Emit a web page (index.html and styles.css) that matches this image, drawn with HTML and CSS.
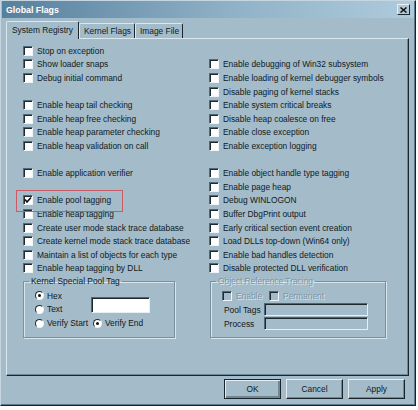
FILE: index.html
```html
<!DOCTYPE html>
<html lang="en">
<head>
  <meta charset="UTF-8" />
  <title>Global Flags</title>
  <link rel="stylesheet" href="styles.css">
</head>
<body>

  <div class="window">
    <!-- title bar -->
    <div class="titlebar">
      <span class="title">Global Flags</span>
      <span class="close">
        <svg width="7" height="6" viewBox="0 0 7 6"><path d="M0.5 0.5 L6.5 5.5 M6.5 0.5 L0.5 5.5" stroke="#111" stroke-width="1.5"/></svg>
      </span>
    </div>

    <!-- tabs -->
    <div class="tabs">
      <div class="tab active">System Registry</div>
      <div class="tab">Kernel Flags</div>
      <div class="tab">Image File</div>
    </div>

    <div class="panel">
      <!-- flags, filled column by column -->
      <div class="flags">
        <label class="flag"><span class="box"></span>Stop on exception</label>
        <label class="flag"><span class="box"></span>Show loader snaps</label>
        <label class="flag"><span class="box"></span>Debug initial command</label>
        <div></div>
        <label class="flag"><span class="box"></span>Enable heap tail checking</label>
        <label class="flag"><span class="box"></span>Enable heap free checking</label>
        <label class="flag"><span class="box"></span>Enable heap parameter checking</label>
        <label class="flag"><span class="box"></span>Enable heap validation on call</label>
        <div></div>
        <label class="flag"><span class="box"></span>Enable application verifier</label>
        <div></div>
        <label class="flag marked"><span class="box"><svg width="8" height="8" viewBox="0 0 8 8"><polyline points="1,3.5 3,6 7,1.5" fill="none" stroke="#111" stroke-width="1.6"/></svg></span>Enable pool tagging</label>
        <label class="flag"><span class="box"></span>Enable heap tagging</label>
        <label class="flag"><span class="box"></span>Create user mode stack trace database</label>
        <label class="flag"><span class="box"></span>Create kernel mode stack trace database</label>
        <label class="flag"><span class="box"></span>Maintain a list of objects for each type</label>
        <label class="flag"><span class="box"></span>Enable heap tagging by DLL</label>

        <div></div>
        <label class="flag"><span class="box"></span>Enable debugging of Win32 subsystem</label>
        <label class="flag"><span class="box"></span>Enable loading of kernel debugger symbols</label>
        <label class="flag"><span class="box"></span>Disable paging of kernel stacks</label>
        <label class="flag"><span class="box"></span>Enable system critical breaks</label>
        <label class="flag"><span class="box"></span>Disable heap coalesce on free</label>
        <label class="flag"><span class="box"></span>Enable close exception</label>
        <label class="flag"><span class="box"></span>Enable exception logging</label>
        <div></div>
        <label class="flag"><span class="box"></span>Enable object handle type tagging</label>
        <label class="flag"><span class="box"></span>Enable page heap</label>
        <label class="flag"><span class="box"></span>Debug WINLOGON</label>
        <label class="flag"><span class="box"></span>Buffer DbgPrint output</label>
        <label class="flag"><span class="box"></span>Early critical section event creation</label>
        <label class="flag"><span class="box"></span>Load DLLs top-down (Win64 only)</label>
        <label class="flag"><span class="box"></span>Enable bad handles detection</label>
        <label class="flag"><span class="box"></span>Disable protected DLL verification</label>
      </div>

      <div class="groups">
        <fieldset class="group pool">
          <legend>Kernel Special Pool Tag</legend>
          <div class="pool-row">
            <div class="radios">
              <label class="opt"><span class="radio on"></span>Hex</label>
              <label class="opt"><span class="radio"></span>Text</label>
            </div>
            <input class="field" type="text">
          </div>
          <div class="verify">
            <label class="opt"><span class="radio"></span>Verify Start</label>
            <label class="opt"><span class="radio on"></span>Verify End</label>
          </div>
        </fieldset>

        <fieldset class="group tracing">
          <legend class="off">Object Reference Tracing</legend>
          <div class="trace-checks">
            <label class="flag off"><span class="box"></span>Enable</label>
            <label class="flag off"><span class="box"></span>Permanent</label>
          </div>
          <div class="trace-row">
            <span class="trace-label">Pool Tags</span>
            <input class="field wide" type="text" disabled>
          </div>
          <div class="trace-row">
            <span class="trace-label">Process</span>
            <input class="field wide" type="text" disabled>
          </div>
        </fieldset>
      </div>
    </div>

    <!-- dialog buttons -->
    <div class="buttons">
      <button class="btn default">OK</button>
      <button class="btn">Cancel</button>
      <button class="btn">Apply</button>
    </div>
  </div>

</body>
</html>
```

FILE: styles.css
```css
body {
  margin: 0;
  background-color: #fff;
  font-family: "Liberation Sans", Arial, sans-serif;
  font-size: 8.4px;
  color: #0f1a22;
}

.window {
  width: 414px;
  height: 404px;
  background-color: #a4bbc9;
  border: 1px solid;
  border-color: #c5d6e0 #18232a #18232a #c5d6e0;
  box-shadow: inset -1px -1px 0 #60798a;
  display: flex;
  flex-direction: column;
}

.titlebar {
  height: 17px;
  margin: 0 1px;
  padding: 0 4px 0 4px;
  background: linear-gradient(90deg, #57809e, #8fb1c7 55%, #aecbdc);
  display: flex;
  align-items: center;
  justify-content: space-between;
}

.title {
  color: #fff;
  font-weight: bold;
  font-size: 8.8px;
}

.close {
  width: 11px;
  height: 9px;
  background-color: #b3c8d5;
  border: 1px solid;
  border-color: #e8f0f4 #1d2930 #1d2930 #e8f0f4;
  display: flex;
  align-items: center;
  justify-content: center;
}

.tabs {
  display: flex;
  align-items: flex-end;
  height: 17px;
  margin: 3px 0 0 5px;
  position: relative;
  z-index: 1;
}

.tab {
  height: 14px;
  line-height: 14px;
  padding: 0 3px 0 4px;
  border-top: 1px solid #dbe7ee;
  border-left: 1px solid #dbe7ee;
  border-right: 1px solid #1b262d;
  border-radius: 2px 2px 0 0;
}

.tab.active {
  height: 17px;
  line-height: 16px;
  padding: 0 5px 0 5px;
  margin-bottom: -1px;
  background-color: #a4bbc9;
}

.panel {
  margin: 0 6px 0 5px;
  border: 1px solid;
  border-color: #dbe7ee #1b262d #1b262d #dbe7ee;
  box-shadow: inset -1px -1px 0 #6f8898;
  padding: 5px 0 0 16px;
  box-sizing: border-box;
  height: 338px;
}

.flags {
  display: grid;
  grid-template-columns: 186px auto;
  grid-template-rows: repeat(17, 13.6px);
  grid-auto-flow: column;
}

.flag {
  display: flex;
  align-items: center;
  gap: 4px;
  white-space: nowrap;
}

.flag.marked {
  position: relative;
}

/* red marker round the pool tagging flag */
.flag.marked::after {
  content: "";
  position: absolute;
  left: -7px;
  top: -4px;
  width: 105px;
  height: 20px;
  border: 1px solid #c95a66;
}

.box {
  width: 8px;
  height: 8px;
  flex: none;
  background-color: #fff;
  border: 1px solid;
  border-color: #50687a #eef4f7 #eef4f7 #50687a;
  box-shadow: inset 1px 1px 0 #1f2a31;
  display: flex;
  align-items: center;
  justify-content: center;
}

.off {
  color: #7b95a5;
  text-shadow: 1px 1px 0 #dbe7ee;
}

.off .box {
  background-color: #a4bbc9;
}

.groups {
  display: flex;
  gap: 35px;
  margin-top: 1px;
}

.group {
  margin: 0;
  padding: 2px 0 5px 11px;
  border: 1px solid #7890a0;
  box-shadow: inset 1px 1px 0 #d8e5ed, 1px 1px 0 #d8e5ed;
  min-inline-size: 0;
}

.group legend {
  padding: 0 2px;
  margin-left: -6px;
  line-height: 11px;
}

.pool {
  width: 139px;
}

.tracing {
  width: 163px;
  padding-bottom: 6px;
}

.pool-row {
  display: flex;
  align-items: flex-start;
}

.radios {
  width: 56px;
}

.opt {
  display: flex;
  align-items: center;
  gap: 3px;
  height: 13.6px;
  white-space: nowrap;
}

.radio {
  width: 7px;
  height: 7px;
  flex: none;
  border-radius: 50%;
  background-color: #fff;
  border: 1px solid;
  border-color: #1f2a31 #eef4f7 #eef4f7 #1f2a31;
  display: flex;
  align-items: center;
  justify-content: center;
}

.radio.on::before {
  content: "";
  width: 3px;
  height: 3px;
  border-radius: 50%;
  background-color: #111;
}

.field {
  width: 59px;
  height: 16px;
  margin: 8px 0 0 0;
  padding: 0;
  box-sizing: border-box;
  background-color: #fff;
  border: 1px solid;
  border-color: #4f6676 #e7eff4 #e7eff4 #4f6676;
  box-shadow: inset 1px 1px 0 #1c272e;
}

.field.wide {
  width: 104px;
  height: 13px;
  margin: 0;
  background-color: #a4bbc9;
}

.verify {
  display: flex;
  gap: 5px;
}

.trace-checks {
  display: flex;
  gap: 7px;
  height: 13.6px;
}

.trace-row {
  display: flex;
  align-items: center;
  height: 14px;
  padding-left: 2px;
}

.trace-label {
  width: 40px;
}

.buttons {
  display: flex;
  justify-content: flex-end;
  gap: 5px;
  margin: 3px 10px 0 0;
}

.btn {
  width: 57px;
  height: 20px;
  padding: 0;
  font-family: inherit;
  font-size: 8.4px;
  color: #0f1a22;
  background-color: #a4bbc9;
  border: 1px solid;
  border-color: #e3edf2 #18232a #18232a #e3edf2;
  box-shadow: inset -1px -1px 0 #6f8898;
}

.btn.default {
  border-color: #18232a;
  box-shadow: inset 1px 1px 0 #e3edf2, inset -2px -2px 0 #6f8898;
}
```
